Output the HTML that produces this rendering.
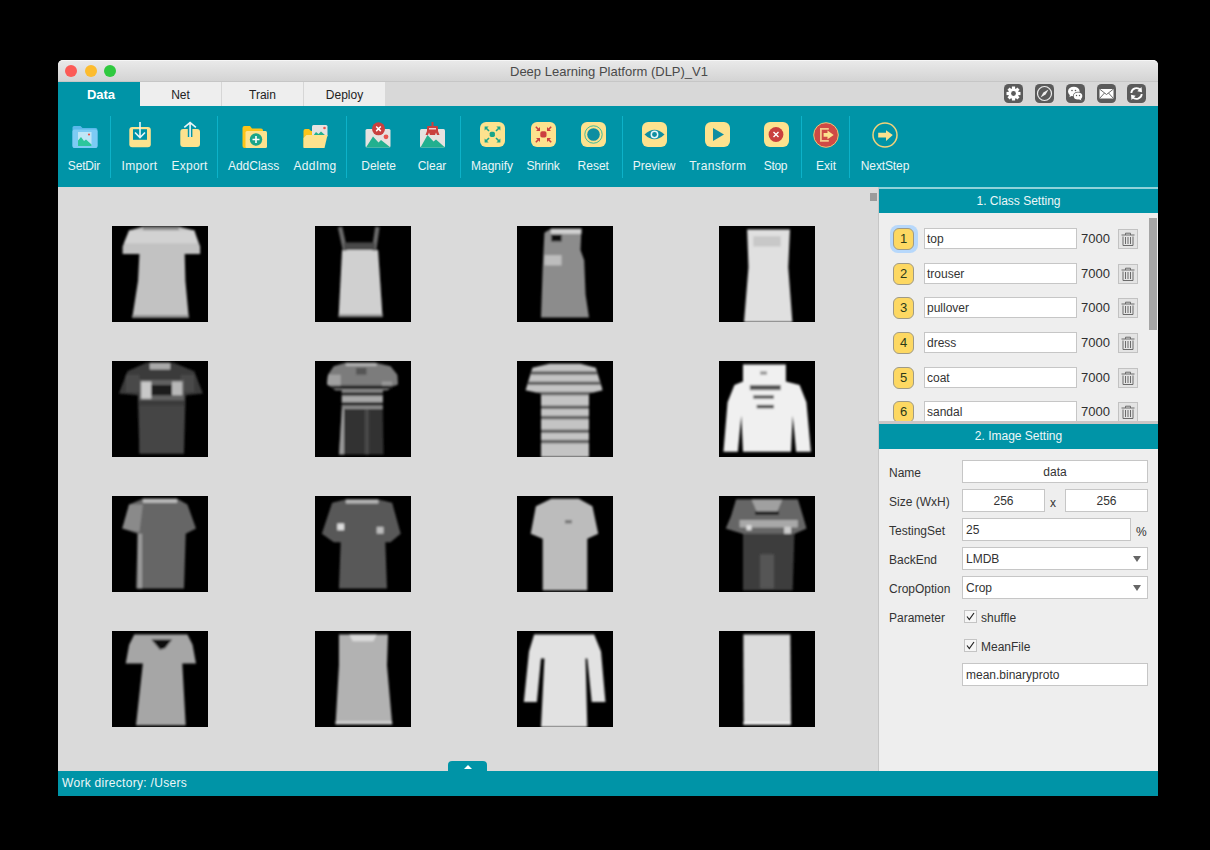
<!DOCTYPE html>
<html><head><meta charset="utf-8">
<style>
*{margin:0;padding:0;box-sizing:border-box}
html,body{width:1210px;height:850px;background:#000;overflow:hidden;font-family:"Liberation Sans",sans-serif}
.a{position:absolute}
.tab{top:82px;height:24px;background:#eeeeee;font-size:12px;color:#222;text-align:center;line-height:26px;border-right:1px solid #d6d6d6}
.lbl{font-size:12px;color:#eaf6f7;top:159px;line-height:14px;white-space:nowrap;text-align:center;width:80px}
.sep{width:1px;top:116px;height:62px;background:#0db2c9}
.hdr{width:279px;background:#0094a7;color:#eef7f8;font-size:12px;text-align:center;line-height:24px}
.badge{width:21px;height:22px;border-radius:6px;background:#fdd862;border:1px solid #9f9a86;font-size:13px;color:#2a3a1a;text-align:center;line-height:20px}
.fld{background:#fff;border:1px solid #c6c6c6;font-size:12px;color:#333;white-space:nowrap;overflow:hidden}
.cnt{font-size:13px;color:#2e2e2e}
.lab{font-size:12px;color:#333;white-space:nowrap}
</style></head><body>
<div class="a" style="left:58px;top:60px;width:1100px;height:736px;background:#dadada;border-radius:5px 5px 0 0"></div>
<div class="a" style="left:58px;top:60px;width:1100px;height:22px;background:linear-gradient(#e9e9e9,#d4d4d4);border-top:1px solid #f6f6f6;border-bottom:1.5px solid #c6c6c6;border-radius:5px 5px 0 0"></div>
<div class="a" style="left:65px;top:65px;width:12px;height:12px;border-radius:50%;background:#fc5b57"></div>
<div class="a" style="left:85px;top:65px;width:12px;height:12px;border-radius:50%;background:#fdbc2e"></div>
<div class="a" style="left:104px;top:65px;width:12px;height:12px;border-radius:50%;background:#2fc93f"></div>
<div class="a" style="left:59px;top:64px;width:1100px;text-align:center;font-size:13px;line-height:16px;color:#4a4a4a">Deep Learning Platform (DLP)_V1</div>
<div class="a" style="left:58px;top:82px;width:1100px;height:24px;background:#d8d8d8"></div>
<div class="a tab" style="left:58px;width:82px;background:#0094a7;color:#fff;font-weight:bold;font-size:13px;border:none;padding-left:4px">Data</div>
<div class="a tab" style="left:140px;width:82px">Net</div>
<div class="a tab" style="left:222px;width:82px">Train</div>
<div class="a tab" style="left:304px;width:81px;border:none">Deploy</div>
<svg class="a" style="left:1004px;top:84px" width="19" height="19" viewBox="0 0 19 19"><rect x="0" y="0" width="19" height="19" rx="4.5" fill="#5b5b5b"/><g transform="translate(9.5 9.5)"><rect x="-1.6" y="-7" width="3.2" height="14" fill="#fff" transform="rotate(0)"/><rect x="-1.6" y="-7" width="3.2" height="14" fill="#fff" transform="rotate(45)"/><rect x="-1.6" y="-7" width="3.2" height="14" fill="#fff" transform="rotate(90)"/><rect x="-1.6" y="-7" width="3.2" height="14" fill="#fff" transform="rotate(135)"/><circle r="5.2" fill="#fff"/><circle r="2.4" fill="#5b5b5b"/></g></svg><svg class="a" style="left:1035px;top:84px" width="19" height="19" viewBox="0 0 19 19"><rect x="0" y="0" width="19" height="19" rx="4.5" fill="#5b5b5b"/><circle cx="9.5" cy="9.5" r="7" fill="none" stroke="#eee" stroke-width="1.2"/><path d="M13.5 5.5 L10.6 10.6 L5.5 13.5 L8.4 8.4 Z" fill="#eee"/></svg><svg class="a" style="left:1066px;top:84px" width="19" height="19" viewBox="0 0 19 19"><rect x="0" y="0" width="19" height="19" rx="4.5" fill="#5b5b5b"/><ellipse cx="7.8" cy="7.5" rx="5.8" ry="4.8" fill="#fff"/><path d="M4 10.5 L3.5 13 L6.5 11.5 Z" fill="#fff"/><ellipse cx="12" cy="12" rx="5" ry="4.2" fill="#5b5b5b"/><ellipse cx="12" cy="12" rx="4.3" ry="3.6" fill="#fff"/><path d="M14.5 14.5 L15.5 16.5 L13 15.2 Z" fill="#fff"/><circle cx="6" cy="6.5" r="0.8" fill="#5b5b5b"/><circle cx="9.5" cy="6.5" r="0.8" fill="#5b5b5b"/><circle cx="10.5" cy="11.5" r="0.7" fill="#5b5b5b"/><circle cx="13.5" cy="11.5" r="0.7" fill="#5b5b5b"/></svg><svg class="a" style="left:1097px;top:84px" width="19" height="19" viewBox="0 0 19 19"><rect x="0" y="0" width="19" height="19" rx="4.5" fill="#5b5b5b"/><rect x="2.5" y="5" width="14" height="9.5" fill="#fff"/><path d="M2.5 5 L9.5 10.5 L16.5 5 M2.5 14.5 L7.5 9 M16.5 14.5 L11.5 9" stroke="#5b5b5b" stroke-width="0.9" fill="none"/></svg><svg class="a" style="left:1127px;top:84px" width="19" height="19" viewBox="0 0 19 19"><rect x="0" y="0" width="19" height="19" rx="4.5" fill="#5b5b5b"/><path d="M4.3 9 A5.2 5.2 0 0 1 13.5 6" stroke="#fff" stroke-width="1.8" fill="none"/><path d="M14.5 3 L15 8.2 L10.3 7.2 Z" fill="#fff"/><path d="M14.7 10 A5.2 5.2 0 0 1 5.5 13" stroke="#fff" stroke-width="1.8" fill="none"/><path d="M4.5 16 L4 10.8 L8.7 11.8 Z" fill="#fff"/></svg>
<div class="a" style="left:58px;top:106px;width:1100px;height:81px;background:#0094a7"></div>
<svg class="a" style="left:72px;top:124px" width="27" height="25" viewBox="0 0 27 25"><path d="M0.5 3.5 Q0.5 2 2 2 H8.5 L10.5 4 H23.5 Q25.5 4 25.5 6 V22 Q25.5 24 23.5 24 H2.5 Q0.5 24 0.5 22 Z" fill="#5ab8ea"/><rect x="0.5" y="5.5" width="25" height="18.5" rx="2" fill="#7ccbf4"/><rect x="6" y="8" width="13.5" height="14" fill="#bfe6f7"/><path d="M6 22 L6 16.5 L9 13 L12 17 L14 15.5 L19.5 20.5 V22 Z" fill="#2cc69c"/><circle cx="17" cy="10.5" r="1.1" fill="#e8554e"/></svg><svg class="a" style="left:129px;top:121px" width="23" height="27" viewBox="0 0 23 27"><rect x="0.3" y="6" width="21.5" height="20.3" rx="3" fill="#fde28e"/><rect x="4" y="8.2" width="14" height="10.6" fill="#0094a7"/><path d="M11 1 V16.5 M6 11.5 L11 16.5 L16 11.5" stroke="#e8f6f8" stroke-width="1.6" fill="none"/></svg><svg class="a" style="left:179px;top:121px" width="23" height="27" viewBox="0 0 23 27"><path d="M1.3 11 Q1.3 8 4.3 8 H8.8 V16 H13.4 V8 H18 Q21 8 21 11 V23 Q21 26 18 26 H4.3 Q1.3 26 1.3 23 Z" fill="#fde28e"/><path d="M11.1 2 V16 M5.3 6.3 L11.1 1.6 L16.9 6.3" stroke="#e8f6f8" stroke-width="1.6" fill="none"/></svg><svg class="a" style="left:242px;top:125px" width="26" height="24" viewBox="0 0 26 24"><path d="M0.5 3 Q0.5 1 2.5 1 H8 L10 3.5 H19 Q21 3.5 21 5.5 V21 Q21 23 19 23 H2.5 Q0.5 23 0.5 21 Z" fill="#fcc419"/><rect x="3.5" y="6" width="21.5" height="17" rx="1.5" fill="#fde28e"/><circle cx="14" cy="14.5" r="6.2" fill="#1aa58a"/><path d="M14 11 V18 M10.5 14.5 H17.5" stroke="#fff" stroke-width="1.6"/></svg><svg class="a" style="left:303px;top:124px" width="26" height="25" viewBox="0 0 26 25"><path d="M0.5 7 Q0.5 5 2.5 5 H6 L8 7 H10 V23 H0.5 Z" fill="#fcc419"/><rect x="9" y="1" width="15.5" height="12" rx="1.5" fill="#e5e2e0"/><path d="M10 12 L13 8 L15.5 10 L18 7.5 L23 12 Z" fill="#22b08f"/><circle cx="21.5" cy="4" r="1.3" fill="#e8554e"/><path d="M3.5 11 H24.5 L21.5 24 H0.5 V14 Z" fill="#fde28e"/></svg><svg class="a" style="left:365px;top:121px" width="27" height="27" viewBox="0 0 27 27"><rect x="0.5" y="8" width="25" height="18.5" rx="1.5" fill="#e6e2e0"/><path d="M1 26.5 L8 15.5 L13.5 21.5 L16 19 L25.5 26.5 Z" fill="#22b08f"/><circle cx="21" cy="15.8" r="2.4" fill="#e8554e"/><circle cx="13.5" cy="7.8" r="6.5" fill="#c9403e"/><path d="M11.2 5.5 L15.8 10.1 M15.8 5.5 L11.2 10.1" stroke="#fff" stroke-width="1.5"/></svg><svg class="a" style="left:420px;top:121px" width="26" height="27" viewBox="0 0 26 27"><rect x="0" y="8" width="25" height="18.5" rx="1.5" fill="#e6e2e0"/><path d="M0.5 26.5 L7.5 14 L13.5 20.5 L16 18.5 L25 26.5 Z" fill="#22b08f"/><rect x="11.5" y="1" width="2" height="4" fill="#c9403e"/><path d="M8 5 H17 Q18 5 18 6 V10 L19.5 14 H17 L16 11.5 L15 14 H10 L9 11.5 L8 14 H5.5 L7 10 V6 Q7 5 8 5 Z" fill="#c9403e"/><rect x="9" y="7" width="7" height="1.5" fill="#f3d0cf"/></svg><svg class="a" style="left:480px;top:122px" width="25" height="25" viewBox="0 0 25 25"><rect x="0" y="0" width="25" height="25" rx="6" fill="#fde28e"/><rect x="9.7" y="9.7" width="5.2" height="5.2" rx="1.6" fill="#1aa58a"/><path d="M5.50 5.50 L9.00 9.00" stroke="#1aa58a" stroke-width="1.6"/><path d="M4.60 4.60 L8.60 4.60 L4.60 8.60 Z" fill="#1aa58a"/><path d="M19.50 5.50 L16.00 9.00" stroke="#1aa58a" stroke-width="1.6"/><path d="M20.40 4.60 L16.40 4.60 L20.40 8.60 Z" fill="#1aa58a"/><path d="M5.50 19.50 L9.00 16.00" stroke="#1aa58a" stroke-width="1.6"/><path d="M4.60 20.40 L8.60 20.40 L4.60 16.40 Z" fill="#1aa58a"/><path d="M19.50 19.50 L16.00 16.00" stroke="#1aa58a" stroke-width="1.6"/><path d="M20.40 20.40 L16.40 20.40 L20.40 16.40 Z" fill="#1aa58a"/></svg><svg class="a" style="left:531px;top:122px" width="25" height="25" viewBox="0 0 25 25"><rect x="0" y="0" width="25" height="25" rx="6" fill="#fde28e"/><rect x="9.3" y="9.3" width="6.2" height="6.2" rx="1.8" fill="#cc4040"/><path d="M4.80 4.80 L8.00 8.00" stroke="#cc4040" stroke-width="1.6"/><path d="M9.00 9.00 L5.00 9.00 L9.00 5.00 Z" fill="#cc4040"/><path d="M20.20 4.80 L17.00 8.00" stroke="#cc4040" stroke-width="1.6"/><path d="M16.00 9.00 L20.00 9.00 L16.00 5.00 Z" fill="#cc4040"/><path d="M4.80 20.20 L8.00 17.00" stroke="#cc4040" stroke-width="1.6"/><path d="M9.00 16.00 L5.00 16.00 L9.00 20.00 Z" fill="#cc4040"/><path d="M20.20 20.20 L17.00 17.00" stroke="#cc4040" stroke-width="1.6"/><path d="M16.00 16.00 L20.00 16.00 L16.00 20.00 Z" fill="#cc4040"/></svg><svg class="a" style="left:581px;top:122px" width="25" height="25" viewBox="0 0 25 25"><rect x="0" y="0" width="25" height="25" rx="6" fill="#fde28e"/><circle cx="12.5" cy="12.5" r="8.7" fill="none" stroke="#2bb39a" stroke-width="0.9"/><circle cx="12.5" cy="12.5" r="6.3" fill="#0e8ea1"/></svg><svg class="a" style="left:642px;top:122px" width="25" height="25" viewBox="0 0 25 25"><rect x="0" y="0" width="25" height="25" rx="6" fill="#fde28e"/><path d="M2.5 12.5 Q12.5 3 22.5 12.5 Q12.5 22 2.5 12.5 Z" fill="#0e8ea1"/><circle cx="12.5" cy="12.5" r="3.2" fill="none" stroke="#e8f6f8" stroke-width="1.5"/></svg><svg class="a" style="left:705px;top:122px" width="25" height="25" viewBox="0 0 25 25"><rect x="0" y="0" width="25" height="25" rx="6" fill="#fde28e"/><path d="M8 6 L19 12.5 L8 19 Z" fill="#0e8ea1"/></svg><svg class="a" style="left:764px;top:122px" width="25" height="25" viewBox="0 0 25 25"><rect x="0" y="0" width="25" height="25" rx="6" fill="#fde28e"/><circle cx="12" cy="12.5" r="7.4" fill="#c9403e"/><path d="M9.5 10 L14.5 15 M14.5 10 L9.5 15" stroke="#fff" stroke-width="1.4"/></svg><svg class="a" style="left:813px;top:122px" width="26" height="26" viewBox="0 0 26 26"><circle cx="13" cy="13" r="12.3" fill="#cf4a45" stroke="#f3d27a" stroke-width="0.9"/><path d="M15.8 6.9 H7.9 V18.9 H15.8" fill="none" stroke="#f4c98a" stroke-width="1.8"/><path d="M10.6 11.1 H14.5 V8.6 L20.7 12.9 L14.5 17.2 V14.7 H10.6 Z" fill="#fde28e"/></svg><svg class="a" style="left:872px;top:122px" width="26" height="26" viewBox="0 0 26 26"><circle cx="13" cy="13" r="12" fill="none" stroke="#f3d27a" stroke-width="1.5"/><path d="M6.2 10.8 H14 V8.2 L20.8 13.1 L14 18.9 V15.6 H6.2 Z" fill="#fde28e"/></svg><div class="a lbl" style="left:44px;letter-spacing:-0.16px;">SetDir</div><div class="a lbl" style="left:99.5px;letter-spacing:0.33px;">Import</div><div class="a lbl" style="left:149.6px;letter-spacing:0.25px;">Export</div><div class="a lbl" style="left:213.6px;">AddClass</div><div class="a lbl" style="left:275px;letter-spacing:0.24px;">AddImg</div><div class="a lbl" style="left:338.6px;">Delete</div><div class="a lbl" style="left:392px;">Clear</div><div class="a lbl" style="left:452px;">Magnify</div><div class="a lbl" style="left:503px;letter-spacing:-0.17px;">Shrink</div><div class="a lbl" style="left:553.3px;">Reset</div><div class="a lbl" style="left:614px;">Preview</div><div class="a lbl" style="left:677.7px;letter-spacing:0.31px;">Transform</div><div class="a lbl" style="left:735.5px;letter-spacing:-0.32px;">Stop</div><div class="a lbl" style="left:786px;">Exit</div><div class="a lbl" style="left:845px;letter-spacing:-0.12px;">NextStep</div><div class="a sep" style="left:110px"></div><div class="a sep" style="left:217px"></div><div class="a sep" style="left:346px"></div><div class="a sep" style="left:460px"></div><div class="a sep" style="left:622px"></div><div class="a sep" style="left:801px"></div><div class="a sep" style="left:849px"></div>
<div class="a" style="left:58px;top:187px;width:820px;height:583px;background:#dadada"></div>
<div class="a" style="left:870px;top:193px;width:7px;height:8px;background:#9b9b9b"></div>
<svg width="0" height="0" style="position:absolute"><defs><filter id="bl" x="-10%" y="-10%" width="120%" height="120%"><feGaussianBlur stdDeviation="0.3"/></filter></defs></svg><svg class="a" style="left:112px;top:226px;background:#000" width="96" height="96" viewBox="0 0 28 28"><g filter="url(#bl)"><path d="M9 0.2 L19.5 0.2 L24 1.3 L25.7 6 L25.7 8.2 L21.2 8.2 L21.4 16 L22.4 26.8 L5.9 26.8 L7.6 16 L8 8.2 L3.1 8.2 L3.1 6 L5 1.3 Z" fill="#c2c2c2"/><path d="M5 1.3 H24 L25 5 H3.5 Z" fill="#d2d2d2"/><rect x="9" y="0.2" width="10.5" height="1" fill="#8a8a8a"/><rect x="5.9" y="26" width="16.5" height="0.8" fill="#8a8a8a"/></g></svg><svg class="a" style="left:315px;top:226px;background:#000" width="96" height="96" viewBox="0 0 28 28"><g filter="url(#bl)"><path d="M7.9 7 L18.4 7 L19.7 26.5 L6.9 26.5 Z" fill="#d0d0d0"/><path d="M7.3 0.3 L8.8 7.2" stroke="#6a6a6a" stroke-width="1.3"/><path d="M18.2 0.3 L17.2 7.2" stroke="#6a6a6a" stroke-width="1.3"/><rect x="8.5" y="4.8" width="9" height="2.2" fill="#4a4a4a"/><rect x="6.9" y="25.8" width="12.8" height="0.8" fill="#888"/></g></svg><svg class="a" style="left:517px;top:226px;background:#000" width="96" height="96" viewBox="0 0 28 28"><g filter="url(#bl)"><path d="M9.9 0.8 L18.8 0.8 L18.5 7 L19.6 10 L20 20 L21 26.7 L7 26.7 L7.5 12 L8 2 Z" fill="#8c8c8c"/><rect x="9.9" y="0.8" width="8.9" height="1.5" fill="#d0d0d0"/><rect x="8" y="8.5" width="5" height="3" fill="#bdbdbd"/><rect x="10" y="2.5" width="3" height="2" fill="#111"/></g></svg><svg class="a" style="left:719px;top:226px;background:#000" width="96" height="96" viewBox="0 0 28 28"><g filter="url(#bl)"><path d="M8.2 1 L20.7 1 L20.2 12 L21.4 28 L7.3 28 L8.6 12 Z" fill="#e0e0e0"/><rect x="10" y="3" width="8" height="3" fill="#c8c8c8"/></g></svg><svg class="a" style="left:112px;top:361px;background:#000" width="96" height="96" viewBox="0 0 28 28"><g filter="url(#bl)"><path d="M10 0.5 L18 0.5 L24 3 L26.5 9.5 L21.5 10 L21 27 L8 27 L7.5 10 L2 9.5 L4.5 3 Z" fill="#3a3a3a"/><rect x="11" y="0.5" width="6" height="2" fill="#aaa"/><rect x="4" y="4" width="4" height="5" fill="#4a4a4a"/><rect x="20" y="4" width="4" height="5" fill="#4a4a4a"/><rect x="8" y="5.5" width="13" height="6" fill="#606060"/><rect x="8.5" y="6" width="3" height="5" fill="#c8c8c8"/><rect x="17.5" y="6" width="3" height="4" fill="#b8b8b8"/><rect x="11.5" y="7" width="6" height="3" fill="#1a1a1a"/><rect x="8" y="13" width="13" height="14" fill="#454545"/></g></svg><svg class="a" style="left:315px;top:361px;background:#000" width="96" height="96" viewBox="0 0 28 28"><g filter="url(#bl)"><defs><clipPath id="c6"><path d="M9 0.5 L17.5 0.5 L22 1.5 L24 4 L24.2 6.8 L21 8.5 L19.8 8.5 L19.8 14 L20 27.3 L7 27.3 L7.8 14 L7.8 8.5 L6 8.5 L3.5 6.8 L3.8 4 L5.5 1.5 Z"/></clipPath></defs><g clip-path="url(#c6)"><rect x="0" y="0" width="28" height="28" fill="#333"/><rect x="0" y="0" width="28" height="7.2" fill="#7c7c7c"/><rect x="9" y="0.5" width="9" height="1" fill="#b0b0b0"/><rect x="12" y="2" width="3" height="2" fill="#555"/><rect x="3" y="4" width="4.5" height="4.5" fill="#a0a0a0"/><rect x="19.5" y="6" width="3" height="2.5" fill="#999"/><rect x="0" y="7.2" width="28" height="1" fill="#222"/><rect x="0" y="8.2" width="28" height="1" fill="#8a8a8a"/><rect x="0" y="9.2" width="28" height="1" fill="#333"/><rect x="0" y="10.2" width="28" height="1.8" fill="#a8a8a8"/><rect x="0" y="12" width="28" height="1" fill="#2a2a2a"/><rect x="0" y="13" width="28" height="1" fill="#888"/><rect x="7" y="14" width="1.5" height="14" fill="#999"/><rect x="14.5" y="14" width="1.2" height="14" fill="#4a4a4a"/></g></g></svg><svg class="a" style="left:517px;top:361px;background:#000" width="96" height="96" viewBox="0 0 28 28"><g filter="url(#bl)"><defs><clipPath id="c7"><path d="M9.5 0.8 L18.5 0.8 L23 2 L25 8.5 L21 9.5 L21 28 L7 28 L7 9.5 L2.5 8.5 L4.5 2 Z"/></clipPath></defs><g clip-path="url(#c7)"><rect x="0" y="0" width="28" height="28" fill="#c4c4c4"/><rect x="2" y="3" width="24" height="1" fill="#5e5e5e"/><rect x="2" y="6" width="24" height="1" fill="#5e5e5e"/><rect x="2" y="9" width="24" height="1" fill="#5e5e5e"/><rect x="2" y="13" width="24" height="1" fill="#5e5e5e"/><rect x="2" y="16" width="24" height="1" fill="#5e5e5e"/><rect x="2" y="20" width="24" height="1" fill="#5e5e5e"/><rect x="2" y="23" width="24" height="1" fill="#5e5e5e"/></g></g></svg><svg class="a" style="left:719px;top:361px;background:#000" width="96" height="96" viewBox="0 0 28 28"><g filter="url(#bl)"><path d="M7 1 L19.5 1 L19.5 6 L23.5 7 L25.5 12 L26.8 26.5 L22.5 26.5 L21.5 16 L21 26.5 L7 26.5 L6.5 16 L5.5 26.5 L1.3 26.5 L2.5 12 L4.5 7 L7 6 Z" fill="#f0f0f0"/><rect x="9" y="7" width="9" height="1.5" fill="#555"/><rect x="10" y="10" width="6" height="1" fill="#555"/><rect x="11" y="12.8" width="5" height="1" fill="#444"/><rect x="12" y="3" width="2" height="1" fill="#999"/></g></svg><svg class="a" style="left:112px;top:496px;background:#000" width="96" height="96" viewBox="0 0 28 28"><g filter="url(#bl)"><path d="M9 0.8 L19 0.8 L22 2.5 L24.5 9.5 L21.5 11 L21 27 L7 27 L7.5 11 L3 9.5 L5 2.5 Z" fill="#666"/><rect x="9" y="0.8" width="10" height="1.2" fill="#bbb"/><path d="M5 2.5 L9 2.5 L8 10.5 L3 9.5 Z" fill="#8a8a8a"/><rect x="7.5" y="11" width="1.3" height="16" fill="#999"/></g></svg><svg class="a" style="left:315px;top:496px;background:#000" width="96" height="96" viewBox="0 0 28 28"><g filter="url(#bl)"><path d="M9 1 L18.5 1 L22.5 2 L25 11 L22 13.5 L20.5 13.5 L21 27 L7 27 L7.5 13.5 L5.5 13.5 L2 11 L5 2 Z" fill="#595959"/><rect x="9" y="1" width="9.5" height="1.2" fill="#b5b5b5"/><rect x="6.5" y="8" width="2" height="2" fill="#ddd"/><rect x="18" y="9" width="2" height="2" fill="#bbb"/></g></svg><svg class="a" style="left:517px;top:496px;background:#000" width="96" height="96" viewBox="0 0 28 28"><g filter="url(#bl)"><path d="M10 0.8 L18 0.8 L22 3 L23.7 11 L20.5 12.5 L20.5 27.5 L7.5 27.5 L7.5 12.5 L4 11 L5.5 3 Z" fill="#bcbcbc"/><rect x="14" y="7" width="2" height="1" fill="#777"/></g></svg><svg class="a" style="left:719px;top:496px;background:#000" width="96" height="96" viewBox="0 0 28 28"><g filter="url(#bl)"><path d="M5 1 L23 1 L24.5 6 L25.5 9.5 L22 11 L21.5 27.5 L7 27.5 L7 11 L2 9.5 L3.5 6 Z" fill="#3e3e3e"/><path d="M5 1 L23 1 L24.5 6 L25.5 9.5 L22 11 L7 11 L2 9.5 L3.5 6 Z" fill="#666"/><path d="M9.5 1 H18.5 L17 4.5 H11 Z" fill="#a0a0a0"/><rect x="10.5" y="4.5" width="7" height="1" fill="#1e1e1e"/><rect x="6" y="7" width="17" height="2.2" fill="#a8a8a8"/><rect x="8" y="8.5" width="1.5" height="1.5" fill="#ddd"/><rect x="19" y="9" width="2" height="2" fill="#ccc"/><rect x="12" y="17" width="4" height="10" fill="#555"/></g></svg><svg class="a" style="left:112px;top:631px;background:#000" width="96" height="96" viewBox="0 0 28 28"><g filter="url(#bl)"><path d="M6.5 1 L22 1 L23.5 4 L24.5 9.5 L20.5 9.5 L21.5 27.5 L7 27.5 L9 9.5 L4 9.5 L5 4 Z" fill="#a6a6a6"/><path d="M11.5 2.5 L17.5 2.5 L15.5 5 L14 5.5 Z" fill="#111"/></g></svg><svg class="a" style="left:315px;top:631px;background:#000" width="96" height="96" viewBox="0 0 28 28"><g filter="url(#bl)"><path d="M7 1 L21.3 1 L21 10 L22.5 27.2 L6 27.2 L7 10 Z" fill="#b2b2b2"/><path d="M10 1 H18 L17 3 H11 Z" fill="#dadada"/><rect x="6" y="26.4" width="16.5" height="0.8" fill="#d8d8d8"/></g></svg><svg class="a" style="left:517px;top:631px;background:#000" width="96" height="96" viewBox="0 0 28 28"><g filter="url(#bl)"><path d="M5 1 L22.5 1 L24.5 6 L25.8 20.7 L21.8 20.7 L20.5 8 L20 8 L20.5 28 L7 28 L8 8 L7 8 L5.8 20.7 L2 20.7 L3.5 6 Z" fill="#e2e2e2"/></g></svg><svg class="a" style="left:719px;top:631px;background:#000" width="96" height="96" viewBox="0 0 28 28"><g filter="url(#bl)"><path d="M7.1 1 L20.8 1 L21 27.3 L7.2 27.3 Z" fill="#dcdcdc"/><rect x="7.1" y="26.5" width="13.9" height="0.8" fill="#f2f2f2"/></g></svg>
<div class="a" style="left:878px;top:187px;width:1px;height:584px;background:#c6c6c6"></div>
<div class="a" style="left:879px;top:187px;width:279px;height:584px;background:#eeeeee"></div>
<div class="a" style="left:879px;top:187px;width:279px;height:2px;background:#8fd2da"></div><div class="a hdr" style="left:879px;top:189px;height:24px">1. Class Setting</div><div class="a" style="left:879px;top:213px;width:279px;height:208px;overflow:hidden"><div class="a" style="left:-879px;top:-213px;width:1210px;height:850px"><div class="a" style="left:890px;top:225px;width:28px;height:28px;border-radius:8px;background:#b7d8fb"></div><div class="a badge" style="left:893px;top:228px">1</div><div class="a fld" style="left:924px;top:228px;width:153px;height:21px;line-height:19px;padding:1px 0 0 2px">top</div><div class="a cnt" style="left:1081px;top:232px;line-height:14px">7000</div><svg class="a" style="left:1118px;top:229px" width="20" height="20" viewBox="0 0 20 20"><rect x="0.5" y="0.5" width="19" height="19" fill="#e4e4e4" stroke="#c2c2c2"/><path d="M3.5 6 H16.5 M7.5 6 V4.2 H12.5 V6 M5 7.5 V16.5 H15 V7.5 M7.5 8 V15 M10 8 V15 M12.5 8 V15" stroke="#6b6b6b" stroke-width="1" fill="none"/></svg><div class="a badge" style="left:893px;top:263px">2</div><div class="a fld" style="left:924px;top:263px;width:153px;height:21px;line-height:19px;padding:1px 0 0 2px">trouser</div><div class="a cnt" style="left:1081px;top:267px;line-height:14px">7000</div><svg class="a" style="left:1118px;top:264px" width="20" height="20" viewBox="0 0 20 20"><rect x="0.5" y="0.5" width="19" height="19" fill="#e4e4e4" stroke="#c2c2c2"/><path d="M3.5 6 H16.5 M7.5 6 V4.2 H12.5 V6 M5 7.5 V16.5 H15 V7.5 M7.5 8 V15 M10 8 V15 M12.5 8 V15" stroke="#6b6b6b" stroke-width="1" fill="none"/></svg><div class="a badge" style="left:893px;top:297px">3</div><div class="a fld" style="left:924px;top:297px;width:153px;height:21px;line-height:19px;padding:1px 0 0 2px">pullover</div><div class="a cnt" style="left:1081px;top:301px;line-height:14px">7000</div><svg class="a" style="left:1118px;top:298px" width="20" height="20" viewBox="0 0 20 20"><rect x="0.5" y="0.5" width="19" height="19" fill="#e4e4e4" stroke="#c2c2c2"/><path d="M3.5 6 H16.5 M7.5 6 V4.2 H12.5 V6 M5 7.5 V16.5 H15 V7.5 M7.5 8 V15 M10 8 V15 M12.5 8 V15" stroke="#6b6b6b" stroke-width="1" fill="none"/></svg><div class="a badge" style="left:893px;top:332px">4</div><div class="a fld" style="left:924px;top:332px;width:153px;height:21px;line-height:19px;padding:1px 0 0 2px">dress</div><div class="a cnt" style="left:1081px;top:336px;line-height:14px">7000</div><svg class="a" style="left:1118px;top:333px" width="20" height="20" viewBox="0 0 20 20"><rect x="0.5" y="0.5" width="19" height="19" fill="#e4e4e4" stroke="#c2c2c2"/><path d="M3.5 6 H16.5 M7.5 6 V4.2 H12.5 V6 M5 7.5 V16.5 H15 V7.5 M7.5 8 V15 M10 8 V15 M12.5 8 V15" stroke="#6b6b6b" stroke-width="1" fill="none"/></svg><div class="a badge" style="left:893px;top:367px">5</div><div class="a fld" style="left:924px;top:367px;width:153px;height:21px;line-height:19px;padding:1px 0 0 2px">coat</div><div class="a cnt" style="left:1081px;top:371px;line-height:14px">7000</div><svg class="a" style="left:1118px;top:368px" width="20" height="20" viewBox="0 0 20 20"><rect x="0.5" y="0.5" width="19" height="19" fill="#e4e4e4" stroke="#c2c2c2"/><path d="M3.5 6 H16.5 M7.5 6 V4.2 H12.5 V6 M5 7.5 V16.5 H15 V7.5 M7.5 8 V15 M10 8 V15 M12.5 8 V15" stroke="#6b6b6b" stroke-width="1" fill="none"/></svg><div class="a badge" style="left:893px;top:401px">6</div><div class="a fld" style="left:924px;top:401px;width:153px;height:21px;line-height:19px;padding:1px 0 0 2px">sandal</div><div class="a cnt" style="left:1081px;top:405px;line-height:14px">7000</div><svg class="a" style="left:1118px;top:402px" width="20" height="20" viewBox="0 0 20 20"><rect x="0.5" y="0.5" width="19" height="19" fill="#e4e4e4" stroke="#c2c2c2"/><path d="M3.5 6 H16.5 M7.5 6 V4.2 H12.5 V6 M5 7.5 V16.5 H15 V7.5 M7.5 8 V15 M10 8 V15 M12.5 8 V15" stroke="#6b6b6b" stroke-width="1" fill="none"/></svg></div></div><div class="a" style="left:1149px;top:218px;width:8px;height:112px;background:#a6a6a6"></div><div class="a" style="left:879px;top:421px;width:279px;height:3px;background:#cbc6c6"></div><div class="a hdr" style="left:879px;top:424px;height:25px;line-height:25px">2. Image Setting</div><div class="a lab" style="left:889px;top:466px;line-height:14px">Name</div><div class="a lab" style="left:889px;top:495px;line-height:14px">Size (WxH)</div><div class="a lab" style="left:889px;top:524px;line-height:14px">TestingSet</div><div class="a lab" style="left:889px;top:553px;line-height:14px">BackEnd</div><div class="a lab" style="left:889px;top:582px;line-height:14px">CropOption</div><div class="a lab" style="left:889px;top:611px;line-height:14px">Parameter</div><div class="a fld" style="left:962px;top:460px;width:186px;height:23px;line-height:21px;text-align:center;padding:1px 0 0 0">data</div><div class="a fld" style="left:962px;top:489px;width:83px;height:23px;line-height:21px;text-align:center;padding:1px 0 0 0">256</div><div class="a lab" style="left:1050px;top:496px;line-height:14px">x</div><div class="a fld" style="left:1065px;top:489px;width:83px;height:23px;line-height:21px;text-align:center;padding:1px 0 0 0">256</div><div class="a fld" style="left:962px;top:518px;width:169px;height:23px;line-height:21px;text-align:left;padding-left:3px;padding-top:1px">25</div><div class="a lab" style="left:1136px;top:525px;line-height:14px">%</div><div class="a fld" style="left:962px;top:547px;width:186px;height:23px;line-height:21px;text-align:left;padding-left:3px;padding-top:1px">LMDB</div><div class="a" style="left:1133px;top:556px;width:0;height:0;border-left:4px solid transparent;border-right:4px solid transparent;border-top:6px solid #666"></div><div class="a fld" style="left:962px;top:576px;width:186px;height:23px;line-height:21px;text-align:left;padding-left:3px;padding-top:1px">Crop</div><div class="a" style="left:1133px;top:585px;width:0;height:0;border-left:4px solid transparent;border-right:4px solid transparent;border-top:6px solid #666"></div><svg class="a" style="left:964px;top:610px" width="13" height="13" viewBox="0 0 13 13"><rect x="0.5" y="0.5" width="12" height="12" fill="#f6f6f6" stroke="#c4c4c4"/><path d="M3 6.5 L5.3 9.5 L10 3" stroke="#222" stroke-width="1.2" fill="none"/></svg><div class="a lab" style="left:981px;top:611px;line-height:14px">shuffle</div><svg class="a" style="left:964px;top:639px" width="13" height="13" viewBox="0 0 13 13"><rect x="0.5" y="0.5" width="12" height="12" fill="#f6f6f6" stroke="#c4c4c4"/><path d="M3 6.5 L5.3 9.5 L10 3" stroke="#222" stroke-width="1.2" fill="none"/></svg><div class="a lab" style="left:981px;top:640px;line-height:14px">MeanFile</div><div class="a fld" style="left:962px;top:663px;width:186px;height:23px;line-height:21px;text-align:left;padding-left:3px;padding-top:1px">mean.binaryproto</div>
<div class="a" style="left:58px;top:771px;width:1100px;height:25px;background:#0094a7"></div>
<div class="a" style="left:448px;top:761px;width:39px;height:12px;background:#0094a7;border-radius:4px 4px 0 0"></div>
<div class="a" style="left:464px;top:765px;width:0;height:0;border-left:4px solid transparent;border-right:4px solid transparent;border-bottom:4px solid #fff"></div>
<div class="a" style="left:62px;top:776px;font-size:12px;line-height:14px;color:#eef7f8;letter-spacing:0.3px">Work directory: /Users</div>
</body></html>
